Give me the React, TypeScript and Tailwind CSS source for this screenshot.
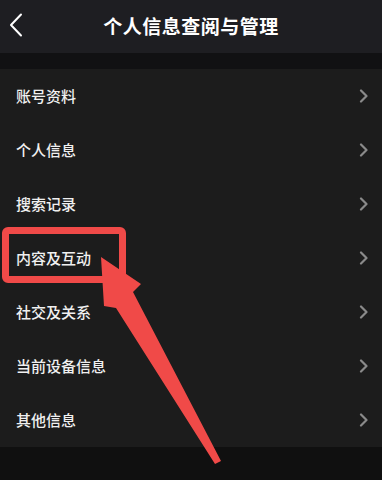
const items = ['账号资料', '个人信息', '搜索记录', '内容及互动', '社交及关系', '当前设备信息', '其他信息']

const font = { fontFamily: '"Noto Sans CJK SC", "Liberation Sans", sans-serif' }

function Chevron() {
  return (
    <svg width="10" height="14" viewBox="0 0 10 14" className="text-[#8a8a8a]">
      <polyline points="2,1.5 7.5,7 2,12.5" fill="none" stroke="currentColor" strokeWidth="2.2" strokeLinecap="round" strokeLinejoin="round" />
    </svg>
  )
}

export default function App() {
  return (
    <div className="relative w-[382px] h-[480px] overflow-hidden bg-[#101010]" style={font}>
      <header className="relative flex h-[53px] items-center justify-center bg-[#1e1e22]">
        <svg className="absolute left-[8px] top-[12px]" width="16" height="26" viewBox="0 0 16 26">
          <polyline points="13,2.5 3,13 13,23.5" fill="none" stroke="white" strokeWidth="2" strokeLinecap="round" strokeLinejoin="round" />
        </svg>
        <h1 className="text-[19px] font-bold text-white tracking-[0.5px]">个人信息查阅与管理</h1>
      </header>
      <div className="h-[16px] bg-[#111113]" />
      <ul className="bg-[#1c1c1c]">
        {items.map((label) => (
          <li key={label} className="flex h-[54px] items-center justify-between pl-[16px] pr-[13px]">
            <span className="text-[15px] font-medium text-[#f0f0f0]">{label}</span>
            <Chevron />
          </li>
        ))}
      </ul>

      {/* annotation overlay */}
      <div className="absolute left-[2px] top-[227px] h-[56px] w-[124px] rounded-[6px] border-[7px] border-[#f04a48]" />
      <svg className="absolute left-0 top-0" width="382" height="480" viewBox="0 0 382 480">
        <polygon
          points="101,257 141,284 133,292 221,461 215,464 116,308 104,306"
          fill="#f04a48"
        />
      </svg>
    </div>
  )
}
